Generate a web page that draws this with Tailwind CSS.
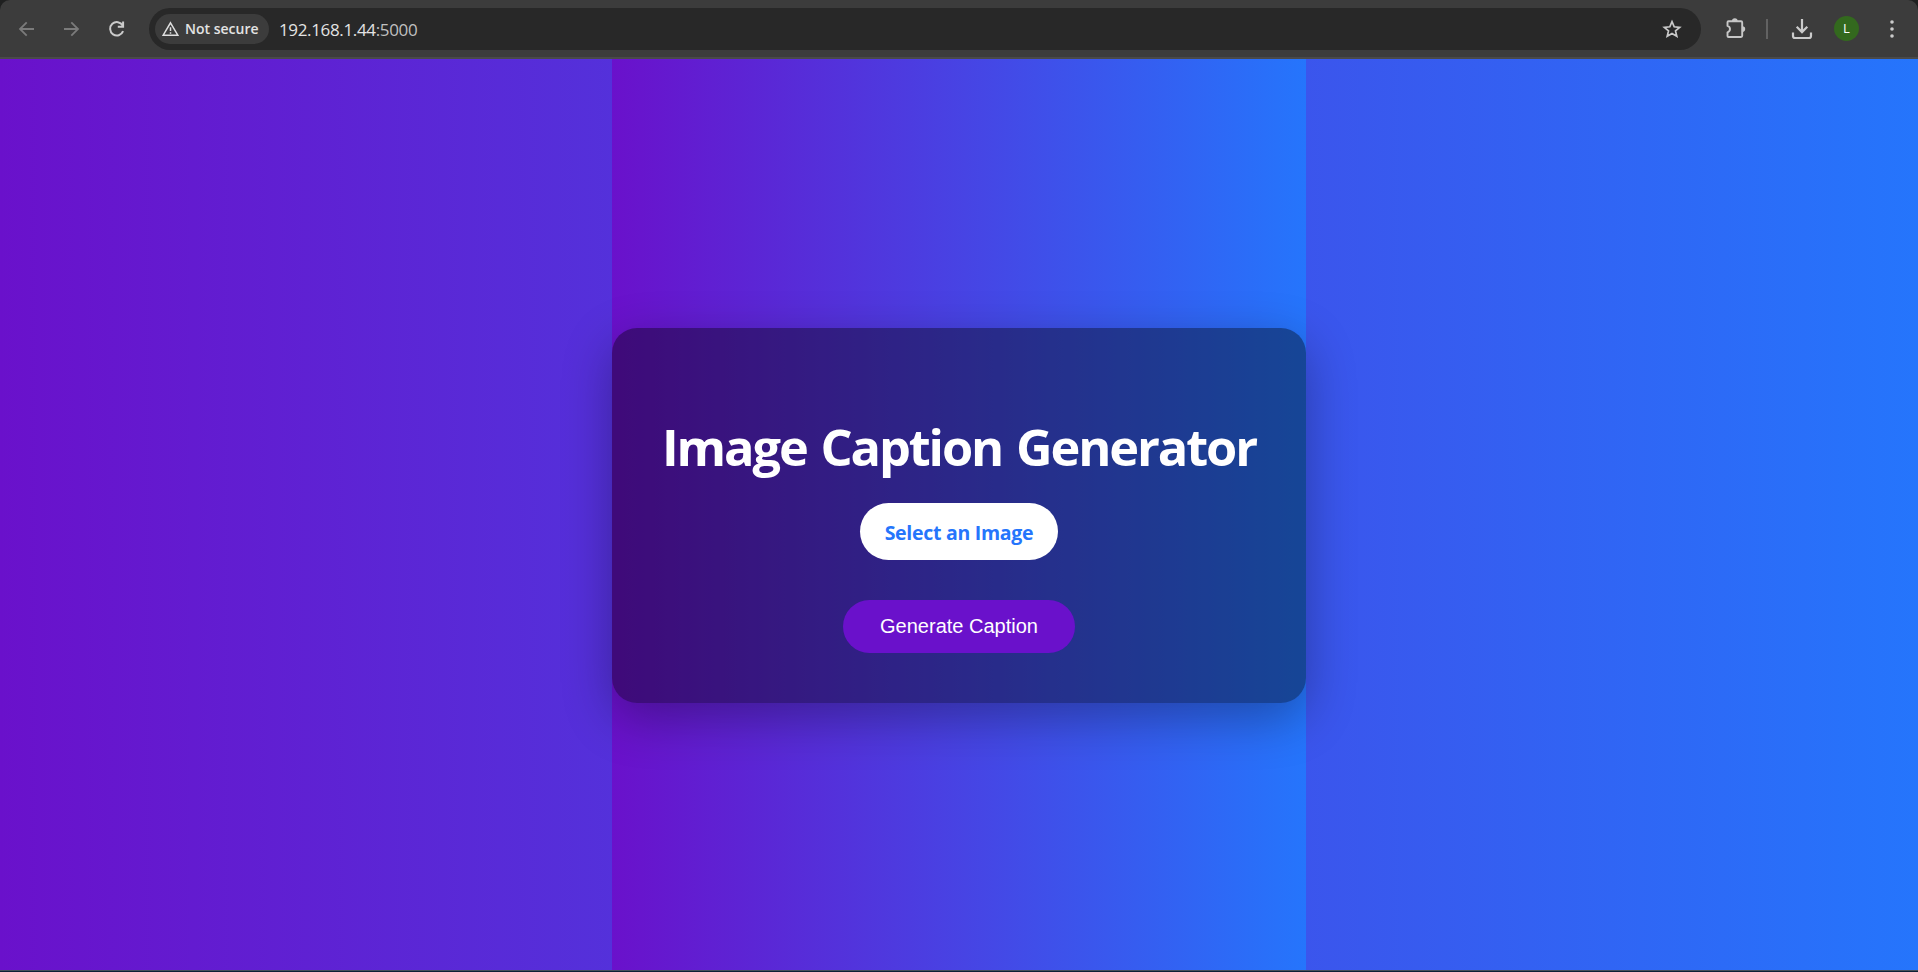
<!DOCTYPE html>
<html lang="en">
<head>
<meta charset="utf-8">
<title>Image Caption Generator</title>
<script src="https://cdn.jsdelivr.net/npm/@tailwindcss/browser@4"></script>
</head>
<body class="h-[972px] w-[1918px] overflow-hidden bg-[#1f2020]">
<div class="flex h-full flex-col">
  <header class="flex h-[59px] shrink-0 items-center rounded-t-[10px] border-b-2 border-[#4a4a4a] bg-[#3c3c3c]">
    <div class="flex w-[149px] shrink-0 items-center pl-[18px]">
      <svg class="mr-[27px] size-[18px]" viewBox="0 0 18 18" fill="none" stroke="#7b7b7b" stroke-width="1.8"><path d="M16 9H2.5M8.7 2.3L2 9l6.7 6.7"/></svg>
      <svg class="mr-[27px] size-[18px]" viewBox="0 0 18 18" fill="none" stroke="#7b7b7b" stroke-width="1.8"><path d="M1 9h13.5M8.3 2.3L15 9l-6.7 6.7"/></svg>
      <svg class="size-[18px]" viewBox="0 0 18 18" fill="none" stroke="#cbcbcb" stroke-width="2"><path d="M14.7 5.5A6.7 6.7 0 1 0 15.1 11.2M15.1 1.5v5.2H9.8"/></svg>
    </div>
    <div class="flex h-[42px] w-[1552px] shrink-0 items-center rounded-full bg-[#282828] pl-[6px] pr-[19px]">
      <div class="flex h-[30px] w-[114px] items-center rounded-full bg-[#3c3c3c] pl-[7px]">
        <svg class="mr-[6px] h-[16px] w-[17px]" viewBox="0 0 17 16" fill="none" stroke="#dedede" stroke-width="1.5"><path d="M8.5 1.8L15.8 14.2H1.2Z"/><path d="M8.5 6.2v3.8M8.5 11.2v1.6"/></svg>
        <span class="whitespace-nowrap font-['Open_Sans',sans-serif] text-[14px] font-semibold leading-4 text-[#e3e3e3]">Not secure</span>
      </div>
      <div class="ml-[10px] grow whitespace-nowrap pt-[2px] font-['Open_Sans',sans-serif] text-[17px] leading-5 tracking-[-0.35px] text-[#e3e3e3]">192.168.1.44<span class="text-[#c0c0c0]">:5000</span></div>
      <svg class="size-[20px]" viewBox="0 0 20 20" fill="none" stroke="#c9c9c9" stroke-width="1.7"><path d="M10 2.7l2.2 5.1 5.5.5-4.2 3.6 1.3 5.4-4.8-2.9-4.8 2.9 1.3-5.4-4.2-3.6 5.5-.5z"/></svg>
    </div>
    <div class="flex grow items-center pl-[23px]">
      <svg class="size-[24px]" viewBox="0 0 24 24"><path d="M3.5 5.2Q3.5 4.2 4.5 4.2H17Q18.2 4.2 18.2 5.4V18.8Q18.2 20 17 20H4.5Q3.5 20 3.5 19V15.3Q6 14.5 6 12.1T3.5 8.9Z" fill="none" stroke="#c7c7c7" stroke-width="1.9" stroke-linejoin="round"/><path d="M8 4a2.8 2.8 0 0 1 5.6 0zM18.4 9.3a2.8 2.8 0 0 1 0 5.6z" fill="#c7c7c7"/></svg>
      <div class="ml-[18px] h-[20px] w-[2px] bg-[#626262]"></div>
      <svg class="ml-[23px] h-[22px] w-[22px]" viewBox="0 0 22 22" fill="none" stroke="#cbcbcb" stroke-width="2.2"><path d="M11 1v13M5.7 8.8L11 14.1l5.3-5.3M2 14.5V18q0 2 2 2h14q2 0 2-2v-3.5"/></svg>
      <div class="ml-[21px] flex size-[25px] items-center justify-center rounded-full bg-[#33691e] font-['Open_Sans',sans-serif] text-[13px] text-white">L</div>
      <svg class="ml-[30px] h-[20px] w-[6px]" viewBox="0 0 6 20" fill="#cbcbcb"><circle cx="3" cy="3" r="1.8"/><circle cx="3" cy="10" r="1.8"/><circle cx="3" cy="17" r="1.8"/></svg>
    </div>
  </header>
  <main class="flex h-[911px] shrink-0 justify-center bg-[linear-gradient(to_right,#6a11cb,#2575fc)]">
    <div class="flex w-[694px] flex-col bg-[linear-gradient(to_right,#6a11cb,#2575fc)] pt-[269px]">
      <div class="flex h-[375px] flex-col items-center rounded-[25px] bg-black/40 pt-[87px] shadow-[0_15px_50px_rgba(0,0,0,0.3)]">
        <h1 class="whitespace-nowrap font-['Open_Sans',sans-serif] text-[50.5px] font-bold leading-[64px] tracking-[-2.1px] text-white [word-spacing:2.8px]">Image Caption Generator</h1>
        <div class="mt-[24px] flex h-[57px] w-[198px] items-center justify-center whitespace-nowrap rounded-full bg-white pt-[3px] font-['Open_Sans',sans-serif] text-[19.5px] font-bold tracking-[-0.28px] text-[#2575fc]">Select an Image</div>
        <button class="mt-[40px] h-[53px] w-[232px] whitespace-nowrap rounded-full bg-[#6a11cb] pb-[2px] font-['Liberation_Sans',sans-serif] text-[20px] text-white">Generate Caption</button>
      </div>
    </div>
  </main>
  <div class="h-px shrink-0 bg-[#46515c]"></div>
  <div class="h-px shrink-0 bg-[#0d2136]"></div>
</div>
</body>
</html>
